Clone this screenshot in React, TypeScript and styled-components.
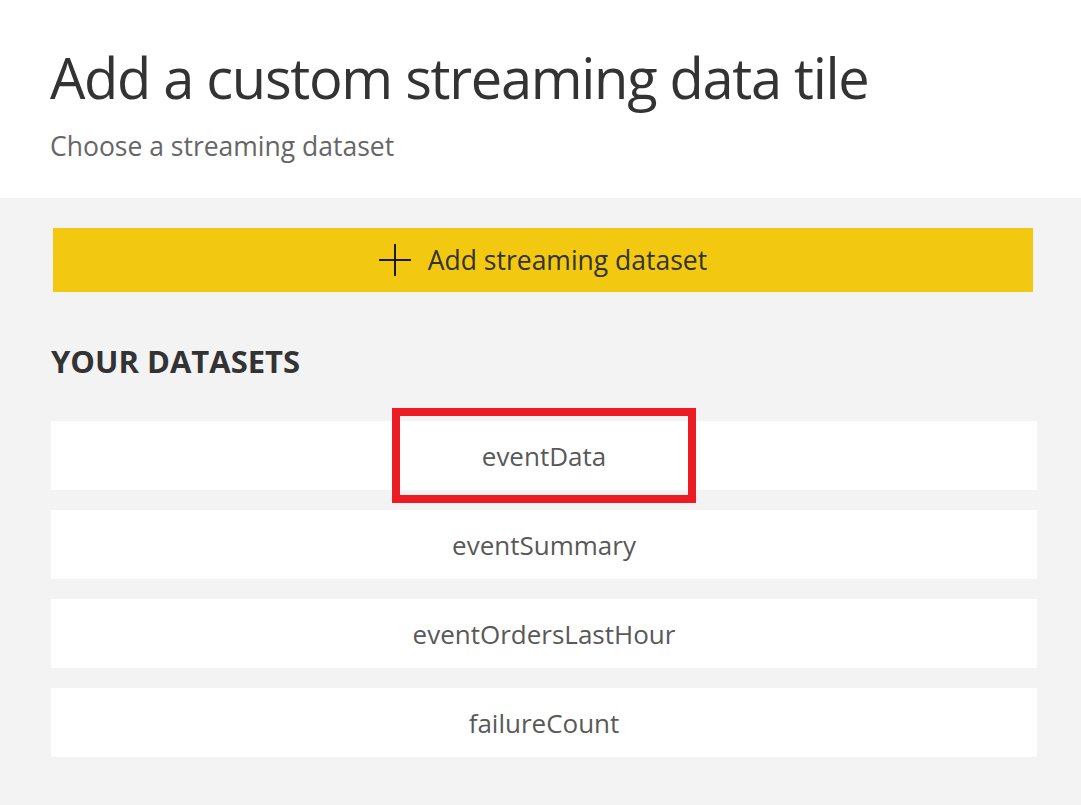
import React from "react";
import styled, { createGlobalStyle } from "styled-components";

const Global = createGlobalStyle`
  html, body { margin: 0; padding: 0; background: #f3f3f3; }
  body { font-family: "Open Sans", "Liberation Sans", sans-serif; }
`;

const Page = styled.div`
  width: 1081px;
  height: 805px;
  display: flex;
  flex-direction: column;
  overflow: hidden;
`;

const Header = styled.header`
  background: #ffffff;
  height: 198px;
  box-sizing: border-box;
  padding: 42px 0 0 50px;
  display: flex;
  flex-direction: column;
`;

const Title = styled.h1`
  margin: 0;
  font-size: 56px;
  font-weight: 400;
  line-height: 70px;
  color: #333333;
  letter-spacing: -1.3px;
`;

const Subtitle = styled.p`
  margin: 18px 0 0 0;
  font-size: 26.5px;
  line-height: 32px;
  color: #666666;
`;

const Panel = styled.main`
  flex: 1;
  background: #f3f3f3;
  padding: 30px 44px 0 51px;
  display: flex;
  flex-direction: column;
`;

const AddButton = styled.button`
  height: 64px;
  margin: 0 4px 0 2px;
  border: none;
  background: #f2c811;
  display: flex;
  align-items: center;
  justify-content: center;
  gap: 17px;
  font-family: inherit;
  font-size: 26.5px;
  color: #333333;
  padding: 0;
  cursor: pointer;
`;

const SectionTitle = styled.h2`
  margin: 49px 0 0 0;
  font-size: 31px;
  font-weight: 700;
  line-height: 40px;
  color: #333333;
`;

const List = styled.div`
  margin-top: 40px;
  display: flex;
  flex-direction: column;
  gap: 20px;
`;

const Row = styled.div`
  position: relative;
  height: 69px;
  background: #ffffff;
  display: flex;
  align-items: center;
  justify-content: center;
  font-size: 26px;
  color: #595959;
`;

const Highlight = styled.div`
  position: absolute;
  left: 341px;
  top: -13px;
  width: 304px;
  height: 95px;
  box-sizing: border-box;
  border: 8px solid #ed1c24;
  pointer-events: none;
`;

const PlusIcon = () => (
  <svg width="32" height="32" viewBox="0 0 32 32" aria-hidden="true">
    <path d="M16 0V32M0 16H32" stroke="#1a1a1a" strokeWidth="2" fill="none" />
  </svg>
);

const datasets = ["eventData", "eventSummary", "eventOrdersLastHour", "failureCount"];

export default function App() {
  return (
    <>
      <Global />
      <Page>
        <Header>
          <Title>Add a custom streaming data tile</Title>
          <Subtitle>Choose a streaming dataset</Subtitle>
        </Header>
        <Panel>
          <AddButton>
            <PlusIcon />
            <span>Add streaming dataset</span>
          </AddButton>
          <SectionTitle>YOUR DATASETS</SectionTitle>
          <List>
            {datasets.map((d, i) => (
              <Row key={d}>
                {d}
                {i === 0 && <Highlight />}
              </Row>
            ))}
          </List>
        </Panel>
      </Page>
    </>
  );
}
